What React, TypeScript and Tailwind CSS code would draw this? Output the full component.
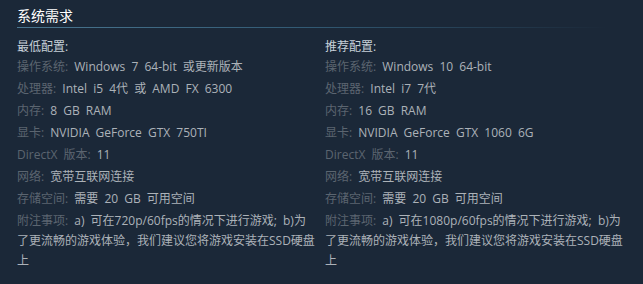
const minSpecs: [string, string][] = [
  ["操作系统:", "Windows 7 64-bit 或更新版本"],
  ["处理器:", "Intel i5 4代 或 AMD FX 6300"],
  ["内存:", "8 GB RAM"],
  ["显卡:", "NVIDIA GeForce GTX 750TI"],
  ["DirectX 版本:", "11"],
  ["网络:", "宽带互联网连接"],
  ["存储空间:", "需要 20 GB 可用空间"],
  ["附注事项:", "a) 可在720p/60fps的情况下进行游戏; b)为了更流畅的游戏体验，我们建议您将游戏安装在SSD硬盘上"],
];

const recSpecs: [string, string][] = [
  ["操作系统:", "Windows 10 64-bit"],
  ["处理器:", "Intel i7 7代"],
  ["内存:", "16 GB RAM"],
  ["显卡:", "NVIDIA GeForce GTX 1060 6G"],
  ["DirectX 版本:", "11"],
  ["网络:", "宽带互联网连接"],
  ["存储空间:", "需要 20 GB 可用空间"],
  ["附注事项:", "a) 可在1080p/60fps的情况下进行游戏; b)为了更流畅的游戏体验，我们建议您将游戏安装在SSD硬盘上"],
];

function SpecColumn({ title, specs }: { title: string; specs: [string, string][] }) {
  return (
    <div>
      <div className="text-[12px] leading-[20px] text-[#c6d0d8]">{title}</div>
      <ul>
        {specs.map(([label, value]) => (
          <li key={label} className="mb-[2px] text-[12px] leading-[20px] text-[#acb2b8] [word-spacing:3px]">
            <span className="text-[#5b6570]">{label}</span> {value}
          </li>
        ))}
      </ul>
    </div>
  );
}

export default function App() {
  return (
    <div
      className="h-[284px] w-full bg-[#1b2838] px-[17px] pt-[7px]"
      style={{ fontFamily: '"Open Sans", "Noto Sans CJK SC", sans-serif' }}
    >
      <h2 className="text-[14px] leading-[18px] text-white">系统需求</h2>
      <div className="mt-[2px] h-px w-[590px] bg-gradient-to-r from-[#4a7690] via-[#3b6e8c]/70 to-transparent" />
      <div className="mt-[9px] grid grid-cols-[299px_299px] gap-x-[9px]">
        <SpecColumn title="最低配置:" specs={minSpecs} />
        <SpecColumn title="推荐配置:" specs={recSpecs} />
      </div>
    </div>
  );
}
